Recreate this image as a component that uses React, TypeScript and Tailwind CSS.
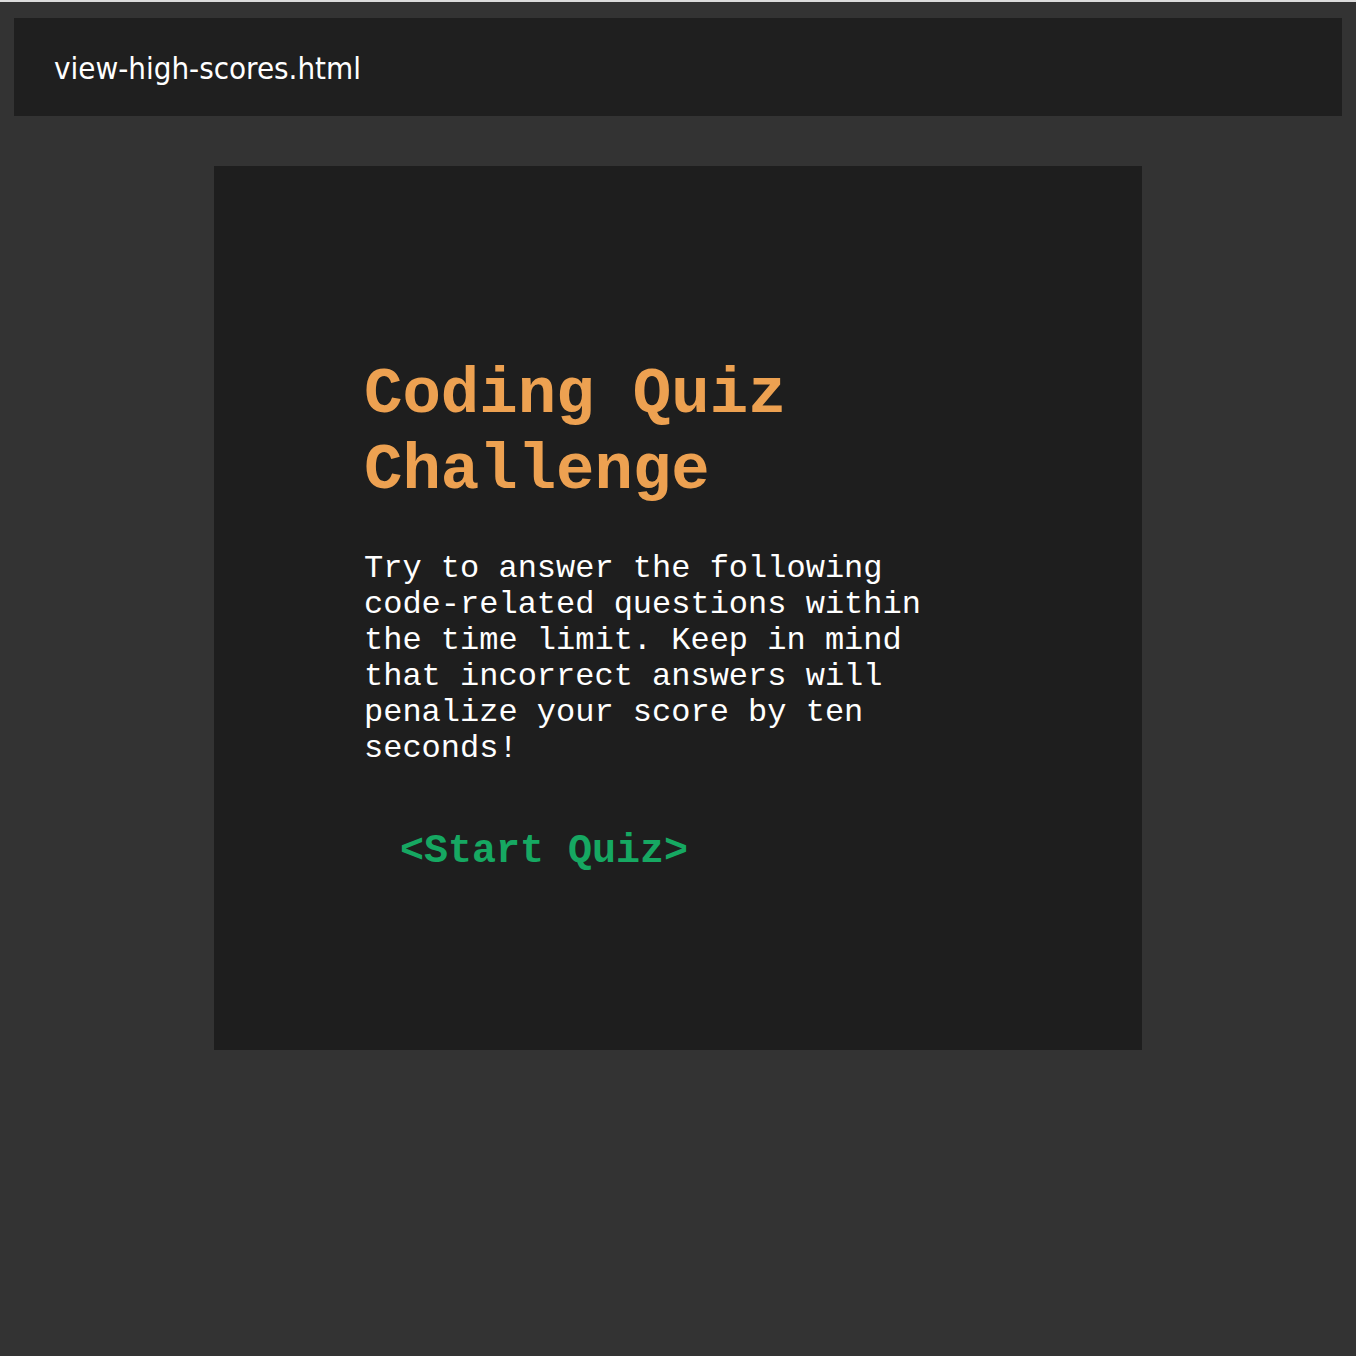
export default function App() {
  return (
    <div className="min-h-[1356px] w-full bg-[#333333]">
      <div className="h-[2px] bg-[#dcdcdc]" />
      <div className="px-[14px] pt-[16px]">
        <header className="flex h-[98px] items-center bg-[#1f1f1f] pl-[40px] pt-[3px]">
          <a
            className="text-[31px] leading-none text-white"
            style={{ fontFamily: 'Tahoma, "DejaVu Sans Condensed", "DejaVu Sans", sans-serif' }}
          >
            view-high-scores.html
          </a>
        </header>
        <main className="mx-auto mt-[50px] h-[884px] w-[928px] bg-[#1e1e1e] pl-[150px] pt-[191px]">
          <div
            className="w-[600px]"
            style={{ fontFamily: '"Courier New", Courier, "Nimbus Mono PS", "Nimbus Mono L", FreeMono, "Liberation Mono", monospace' }}
          >
            <h1 className="text-[64px] font-bold leading-[76px] text-[#eda151]">
              Coding Quiz Challenge
            </h1>
            <p className="mt-[42px] text-[32px] leading-[36px] text-white">
              Try to answer the following code-related questions within the time limit. Keep in mind that incorrect answers will penalize your score by ten seconds!
            </p>
            <button className="ml-[36px] mt-[62px] text-[40px] font-bold leading-[45px] text-[#16a862]">
              &lt;Start Quiz&gt;
            </button>
          </div>
        </main>
      </div>
    </div>
  );
}
